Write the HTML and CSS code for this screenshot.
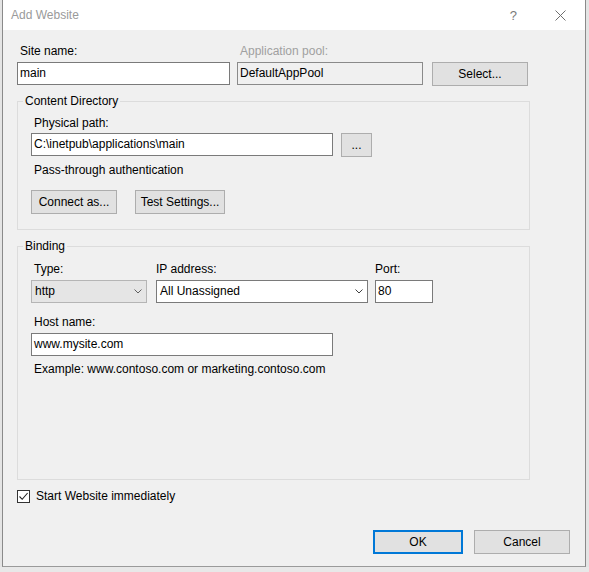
FILE: index.html
```html
<!DOCTYPE html>
<html>
<head>
<meta charset="utf-8">
<link rel="stylesheet" href="styles.css">
</head>
<body>
<div class="window">
  <div class="titlebar">
    <span class="title">Add Website</span>
    <span class="help">?</span>
    <span class="close"><svg width="11" height="11" viewBox="0 0 11 11"><path d="M0.5 0.5 L10.5 10.5 M10.5 0.5 L0.5 10.5" stroke="#6e6e6e" stroke-width="1" fill="none"/></svg></span>
  </div>
  <div class="content">
    <div class="row top-row">
      <div class="field f-site">
        <div class="lbl pad">Site name:</div>
        <div class="input">main</div>
      </div>
      <div class="field f-pool">
        <div class="lbl pad disabled">Application pool:</div>
        <div class="input ro">DefaultAppPool</div>
      </div>
      <div class="btn btn-select">Select...</div>
    </div>

    <fieldset class="group g-content">
      <legend>Content Directory</legend>
      <div class="inner">
        <div class="lbl pad">Physical path:</div>
        <div class="row path-row">
          <div class="input w-path">C:\inetpub\applications\main</div>
          <div class="btn btn-browse">...</div>
        </div>
        <div class="lbl pad pass">Pass-through authentication</div>
        <div class="row btn-row">
          <div class="btn btn-connect">Connect as...</div>
          <div class="btn btn-test">Test Settings...</div>
        </div>
      </div>
    </fieldset>

    <fieldset class="group g-binding">
      <legend>Binding</legend>
      <div class="inner">
        <div class="row bind-row">
          <div class="field f-type">
            <div class="lbl pad">Type:</div>
            <div class="select gray">http<svg class="chev" width="8" height="5" viewBox="0 0 8 5"><path d="M0.5 0.5 L4 4 L7.5 0.5" stroke="#606060" stroke-width="1" fill="none"/></svg></div>
          </div>
          <div class="field f-ip">
            <div class="lbl">IP address:</div>
            <div class="select white">All Unassigned<svg class="chev" width="8" height="5" viewBox="0 0 8 5"><path d="M0.5 0.5 L4 4 L7.5 0.5" stroke="#404040" stroke-width="1" fill="none"/></svg></div>
          </div>
          <div class="field f-port">
            <div class="lbl">Port:</div>
            <div class="input">80</div>
          </div>
        </div>
        <div class="lbl pad host-lbl">Host name:</div>
        <div class="input w-host">www.mysite.com</div>
        <div class="lbl pad example">Example: www.contoso.com or marketing.contoso.com</div>
      </div>
    </fieldset>

    <div class="row check-row">
      <span class="checkbox"><svg width="11" height="11" viewBox="0 0 11 11"><path d="M1.5 5.5 L4.2 8.3 L9.6 2" stroke="#222" stroke-width="1.1" fill="none"/></svg></span>
      <span class="check-lbl">Start Website immediately</span>
    </div>

    <div class="row footer">
      <div class="btn btn-ok">OK</div>
      <div class="btn btn-cancel">Cancel</div>
    </div>
  </div>
</div>
<div class="under"></div>
</body>
</html>
```

FILE: styles.css
```css
html, body {
  margin: 0;
  padding: 0;
  background: #e4e4e4;
}
body {
  font-family: "Liberation Sans", Arial, sans-serif;
  font-size: 12px;
  color: #000;
  width: 589px;
  height: 572px;
  overflow: hidden;
}
.window {
  margin-left: 2px;
  width: 584px;
  height: 567px;
  box-sizing: border-box;
  border-left: 1px solid #8a8a8a;
  border-right: 1px solid #8a8a8a;
  border-bottom: 1px solid #9a9a9a;
  background: #f0f0f0;
}
.titlebar {
  height: 30px;
  background: #fff;
  display: flex;
  align-items: center;
  padding-left: 8px;
  color: #9a9a9a;
}
.title {
  font-size: 12px;
  flex: 1;
}
.help {
  font-size: 13px;
  color: #7a7a7a;
  margin-right: 38px;
}
.close {
  display: flex;
  margin-right: 19px;
}
.content {
  padding: 13px 0 0 14px;
}
.row {
  display: flex;
}
.lbl {
  height: 16px;
  line-height: 16px;
  white-space: nowrap;
}
.lbl.pad {
  padding-left: 3px;
}
.disabled {
  color: #a0a0a0;
}
.field {
  display: flex;
  flex-direction: column;
}
.field .lbl {
  margin-bottom: 3px;
}
.input {
  box-sizing: border-box;
  height: 23px;
  line-height: 21px;
  border: 1px solid #7a7a7a;
  background: #fff;
  padding-left: 2px;
  white-space: nowrap;
}
.input.ro {
  background: #f0f0f0;
  border-color: #8a8a8a;
}
.f-site { width: 213px; }
.f-pool { width: 186px; margin-left: 7px; }
.btn {
  box-sizing: border-box;
  height: 24px;
  line-height: 22px;
  border: 1px solid #adadad;
  background: #e1e1e1;
  text-align: center;
  white-space: nowrap;
}
.btn-select {
  width: 96px;
  margin-left: 9px;
  margin-top: 19px;
}
.group {
  margin: 0;
  padding: 0 0 15px 0;
  border: 1px solid #dcdcdc;
  width: 513px;
  box-sizing: border-box;
  min-width: 0;
}
.group legend {
  margin-left: 5px;
  padding: 0 2px;
  line-height: 16px;
  height: 16px;
}
.g-content {
  margin-top: 7px;
  height: 137px;
}
.g-content .inner {
  padding: 6px 0 0 13px;
}
.path-row {
  margin-top: 2px;
}
.w-path { width: 302px; }
.btn-browse {
  width: 31px;
  margin-left: 8px;
}
.pass {
  margin-top: 5px;
}
.btn-row {
  margin-top: 12px;
}
.btn-connect { width: 86px; }
.btn-test { width: 90px; margin-left: 18px; }

.g-binding {
  margin-top: 8px;
  height: 242px;
}
.g-binding .inner {
  padding: 7px 0 0 13px;
}
.select {
  box-sizing: border-box;
  height: 23px;
  line-height: 21px;
  padding-left: 3px;
  display: flex;
  align-items: center;
  justify-content: space-between;
  padding-right: 4px;
  white-space: nowrap;
}
.select.gray {
  background: #e5e5e5;
  border: 1px solid #b5b5b5;
}
.select.white {
  background: #fff;
  border: 1px solid #7a7a7a;
}
.f-type { width: 116px; }
.f-ip { width: 212px; margin-left: 9px; }
.f-port { width: 58px; margin-left: 7px; }
.host-lbl { margin-top: 11px; }
.w-host { width: 302px; margin-top: 3px; }
.example { margin-top: 5px; }

.check-row {
  margin-top: 9px;
  align-items: center;
  height: 14px;
}
.checkbox {
  box-sizing: border-box;
  width: 13px;
  height: 13px;
  border: 1px solid #333;
  background: #fff;
  display: flex;
  align-items: center;
  justify-content: center;
}
.check-lbl {
  margin-left: 6px;
}
.footer {
  margin-top: 27px;
  padding-left: 356px;
}
.btn-ok {
  width: 90px;
  border: 2px solid #0078d7;
  line-height: 20px;
}
.btn-cancel {
  width: 96px;
  margin-left: 11px;
}
.under {
  height: 5px;
  background: #e8e8e8;
}
```
